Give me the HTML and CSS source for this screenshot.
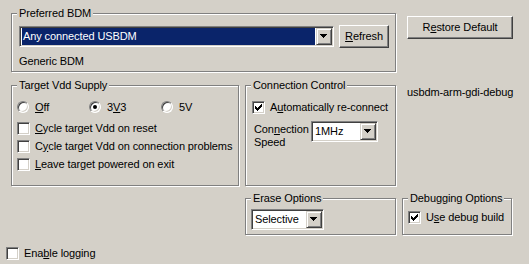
FILE: index.html
```html
<!DOCTYPE html>
<html lang="en">
<head>
    <meta charset="UTF-8">
    <title>USBDM Settings</title>
    <link rel="stylesheet" href="styles.css">
</head>
<body>
    <div class="dialog">
        <div class="grid">
            <!-- preferred BDM -->
            <fieldset class="group group-bdm">
                <legend>Preferred BDM</legend>
                <div class="bdm-row">
                    <div class="combo combo-bdm">
                        <span class="combo-value selected">Any connected USBDM</span>
                        <span class="combo-btn"><svg width="7" height="4" viewBox="0 0 7 4"><path d="M0 0h7v1h-1v1h-1v1h-1v1h-1v-1h-1v-1h-1v-1h-1z"/></svg></span>
                    </div>
                    <button class="btn btn-refresh"><u>R</u>efresh</button>
                </div>
                <div class="bdm-desc">Generic BDM</div>
            </fieldset>
            <button class="btn btn-restore">R<u>e</u>store Default</button>

            <!-- target vdd -->
            <fieldset class="group group-vdd">
                <legend>Target Vdd Supply</legend>
                <div class="radio-row">
                    <label class="opt opt-radio"><span class="radio"></span><u>O</u>ff</label>
                    <label class="opt opt-radio"><span class="radio checked"></span>3<u>V</u>3</label>
                    <label class="opt opt-radio"><span class="radio"></span>5V</label>
                </div>
                <label class="opt"><span class="check"></span><u>C</u>ycle target Vdd on reset</label>
                <label class="opt"><span class="check"></span>C<u>y</u>cle target Vdd on connection problems</label>
                <label class="opt"><span class="check"></span><u>L</u>eave target powered on exit</label>
            </fieldset>

            <!-- connection -->
            <fieldset class="group group-conn">
                <legend>Connection Control</legend>
                <label class="opt"><span class="check"><svg width="7" height="7" viewBox="0 0 7 7"><path d="M0 2h1v1h1v1h1v-1h1v-1h1v-1h1v-1h1v3h-1v1h-1v1h-1v1h-1v1h-1v-1h-1v-1h-1z"/></svg></span>A<u>u</u>tomatically re-connect</label>
                <div class="speed-row">
                    <span class="speed-label">Con<u>n</u>ection<br>Speed</span>
                    <div class="combo combo-speed">
                        <span class="combo-value">1MHz</span>
                        <span class="combo-btn"><svg width="7" height="4" viewBox="0 0 7 4"><path d="M0 0h7v1h-1v1h-1v1h-1v1h-1v-1h-1v-1h-1v-1h-1z"/></svg></span>
                    </div>
                </div>
            </fieldset>
            <div class="target-name">usbdm-arm-gdi-debug</div>

            <!-- erase -->
            <fieldset class="group group-erase">
                <legend>Erase Options</legend>
                <div class="combo combo-erase">
                    <span class="combo-value">Selective</span>
                    <span class="combo-btn"><svg width="7" height="4" viewBox="0 0 7 4"><path d="M0 0h7v1h-1v1h-1v1h-1v1h-1v-1h-1v-1h-1v-1h-1z"/></svg></span>
                </div>
            </fieldset>

            <!-- debugging -->
            <fieldset class="group group-debug">
                <legend>Debugging Options</legend>
                <label class="opt"><span class="check"><svg width="7" height="7" viewBox="0 0 7 7"><path d="M0 2h1v1h1v1h1v-1h1v-1h1v-1h1v-1h1v3h-1v1h-1v1h-1v1h-1v1h-1v-1h-1v-1h-1z"/></svg></span>U<u>s</u>e debug build</label>
            </fieldset>
        </div>

        <label class="opt opt-logging"><span class="check"></span>Ena<u>b</u>le logging</label>
    </div>
</body>
</html>
```
FILE: styles.css
```css
body {
    margin: 0;
    background: #d4d0c8;
    font-family: "Liberation Sans", Arial, sans-serif;
    font-size: 11px;
    line-height: 13px;
    letter-spacing: -0.1px;
    color: #000;
    overflow: hidden;
}
.dialog {
    padding: 7px 0 0 6px;
}
.grid {
    display: grid;
    grid-template-columns: 228px 151px 1fr;
    column-gap: 6px;
    row-gap: 6px;
    margin-left: 5px;
}

/* etched group box */
.group {
    margin: 0;
    padding: 0 5px;
    min-width: 0;
    border: 1px solid #808080;
    box-shadow: inset 1px 1px 0 #fff, 1px 1px 0 #fff;
}
.group legend {
    padding: 0 2px;
    margin-left: 0;
    line-height: 13px;
    white-space: nowrap;
    background: #d4d0c8;
}

.group-bdm {
    grid-column: 1 / 3;
    padding: 5px 6px 3px 7px;
    margin-bottom: 1px;
}
.group-bdm legend {
    margin-left: -2px;
}
.bdm-row {
    display: flex;
    align-items: center;
    gap: 5px;
}
.combo-bdm {
    flex: 1;
}
.bdm-desc {
    margin-top: 7px;
}

.btn-restore {
    align-self: start;
    justify-self: start;
    margin: 9px 0 0 5px;
    width: 106px;
}
.btn-refresh {
    width: 50px;
}

.group-vdd {
    padding: 6px 5px 12px 5px;
}
.group-conn {
    padding: 6px 5px 0 6px;
}
.group-conn legend {
    margin-left: -1px;
}
.target-name {
    margin: 7px 0 0 5px;
}
.group-erase {
    grid-column: 2;
    padding: 4px 5px 4px 5px;
}
.group-debug {
    grid-column: 3;
    justify-self: start;
    width: 110px;
    box-sizing: border-box;
    padding: 3px 5px 0 5px;
}

/* push buttons */
.btn {
    font: inherit;
    letter-spacing: inherit;
    color: #000;
    background: #d4d0c8;
    border: 1px solid;
    border-color: #fff #404040 #404040 #fff;
    box-shadow: inset -1px -1px 0 #808080, inset 1px 1px 0 #d4d0c8;
    padding: 0;
    height: 23px;
    box-sizing: border-box;
}

/* combo boxes */
.combo {
    display: flex;
    height: 21px;
    box-sizing: border-box;
    border: 1px solid;
    border-color: #808080 #fff #fff #808080;
    box-shadow: inset 1px 1px 0 #404040, inset -1px -1px 0 #d4d0c8;
    background: #fff;
    padding: 1px;
}
.combo-value {
    flex: 1;
    padding-left: 2px;
    line-height: 17px;
    white-space: nowrap;
    overflow: hidden;
}
.combo-value.selected {
    background: #0a246a;
    color: #fff;
    margin: 0 1px;
    padding-left: 1px;
}
.combo-btn {
    width: 16px;
    height: 17px;
    box-sizing: border-box;
    flex: none;
    border: 1px solid;
    border-color: #d4d0c8 #404040 #404040 #d4d0c8;
    box-shadow: inset 1px 1px 0 #fff, inset -1px -1px 0 #808080;
    background: #d4d0c8;
    padding: 5px 0 0 3px;
}
.combo-btn svg {
    display: block;
}
.combo-speed {
    width: 67px;
}
.combo-erase {
    width: 73px;
}

/* check boxes and radios */
.opt {
    display: flex;
    align-items: center;
    height: 18px;
    white-space: nowrap;
}
.check {
    width: 13px;
    height: 13px;
    box-sizing: border-box;
    flex: none;
    border: 1px solid;
    border-color: #808080 #fff #fff #808080;
    box-shadow: inset 1px 1px 0 #404040, inset -1px -1px 0 #d4d0c8;
    background: #fff;
    padding: 2px;
    margin-right: 5px;
}
.check svg {
    display: block;
}
.radio-row {
    display: flex;
    margin-bottom: 3px;
}
.opt-radio {
    width: 73px;
}
.radio {
    width: 12px;
    height: 12px;
    box-sizing: border-box;
    flex: none;
    border-radius: 50%;
    border: 1px solid;
    border-color: #808080 #fff #fff #808080;
    box-shadow: inset 1px 1px 0 #404040, inset -1px -1px 0 #d4d0c8;
    background: #fff;
    margin-right: 6px;
    display: flex;
    align-items: center;
    justify-content: center;
}
.radio.checked::after {
    content: "";
    width: 4px;
    height: 4px;
    border-radius: 50%;
    background: #000;
}

.speed-row {
    display: flex;
    align-items: flex-start;
    margin-top: 5px;
}
.speed-label {
    width: 57px;
    margin: 2px 0 0 2px;
}

.opt-logging {
    margin-top: 9px;
}
```
